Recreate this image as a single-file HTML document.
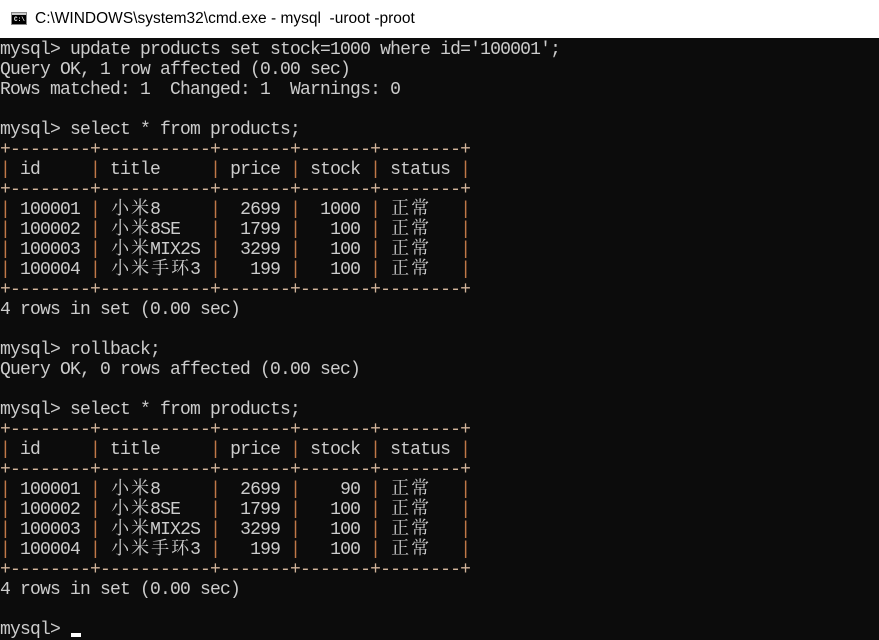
<!DOCTYPE html>
<html><head><meta charset="utf-8"><style>
html,body{margin:0;padding:0;width:879px;height:639px;overflow:hidden;background:#0c0c0c;}
#tb{position:absolute;left:0;top:0;width:879px;height:38px;background:#fff;}
#tb .t{position:absolute;left:35px;top:10px;font:15.5px "Liberation Sans","DejaVu Sans",sans-serif;color:#000;white-space:pre;}
#ic{position:absolute;left:11px;top:12px;width:16px;height:13px;background:#000;border:1px solid #888;box-sizing:border-box;}
#ic i{position:absolute;left:2px;top:3px;font:bold 6px "Liberation Mono",monospace;color:#fff;font-style:normal;}
#ic b{position:absolute;left:0;top:0;width:14px;height:2px;background:#ccc;}
.l{position:absolute;left:0;height:20px;line-height:20px;font-family:"Liberation Mono",monospace;font-size:18px;letter-spacing:-0.8px;color:#cccccc;white-space:pre;margin-top:2px;}
.c{display:inline-block;width:20px;font-family:"Noto Serif CJK SC","Noto Sans CJK SC",serif;font-size:18px;letter-spacing:0;text-align:center;line-height:20px;height:20px;vertical-align:top;position:relative;top:-3px;}
.d{color:#d2b49a}
.v{color:#c07848}
#cur{position:absolute;left:71px;top:633px;width:10px;height:4px;background:#fff;}
</style></head><body>
<div id="tb"><div id="ic"><b></b><i>C:\</i></div><div class="t">C:\WINDOWS\system32\cmd.exe - mysql  -uroot -proot</div></div>

<div class="l" style="top:38px">mysql&gt; update products set stock=1000 where id='100001';</div>
<div class="l" style="top:58px">Query OK, 1 row affected (0.00 sec)</div>
<div class="l" style="top:78px">Rows matched: 1  Changed: 1  Warnings: 0</div>
<div class="l" style="top:118px">mysql&gt; select * from products;</div>
<div class="l d" style="top:138px">+--------+-----------+-------+-------+--------+</div>
<div class="l" style="top:158px"><span class="v">|</span> id     <span class="v">|</span> title     <span class="v">|</span> price <span class="v">|</span> stock <span class="v">|</span> status <span class="v">|</span></div>
<div class="l d" style="top:178px">+--------+-----------+-------+-------+--------+</div>
<div class="l" style="top:198px"><span class="v">|</span> 100001 <span class="v">|</span> <span class="c">小</span><span class="c">米</span>8     <span class="v">|</span>  2699 <span class="v">|</span>  1000 <span class="v">|</span> <span class="c">正</span><span class="c">常</span>   <span class="v">|</span></div>
<div class="l" style="top:218px"><span class="v">|</span> 100002 <span class="v">|</span> <span class="c">小</span><span class="c">米</span>8SE   <span class="v">|</span>  1799 <span class="v">|</span>   100 <span class="v">|</span> <span class="c">正</span><span class="c">常</span>   <span class="v">|</span></div>
<div class="l" style="top:238px"><span class="v">|</span> 100003 <span class="v">|</span> <span class="c">小</span><span class="c">米</span>MIX2S <span class="v">|</span>  3299 <span class="v">|</span>   100 <span class="v">|</span> <span class="c">正</span><span class="c">常</span>   <span class="v">|</span></div>
<div class="l" style="top:258px"><span class="v">|</span> 100004 <span class="v">|</span> <span class="c">小</span><span class="c">米</span><span class="c">手</span><span class="c">环</span>3 <span class="v">|</span>   199 <span class="v">|</span>   100 <span class="v">|</span> <span class="c">正</span><span class="c">常</span>   <span class="v">|</span></div>
<div class="l d" style="top:278px">+--------+-----------+-------+-------+--------+</div>
<div class="l" style="top:298px">4 rows in set (0.00 sec)</div>
<div class="l" style="top:338px">mysql&gt; rollback;</div>
<div class="l" style="top:358px">Query OK, 0 rows affected (0.00 sec)</div>
<div class="l" style="top:398px">mysql&gt; select * from products;</div>
<div class="l d" style="top:418px">+--------+-----------+-------+-------+--------+</div>
<div class="l" style="top:438px"><span class="v">|</span> id     <span class="v">|</span> title     <span class="v">|</span> price <span class="v">|</span> stock <span class="v">|</span> status <span class="v">|</span></div>
<div class="l d" style="top:458px">+--------+-----------+-------+-------+--------+</div>
<div class="l" style="top:478px"><span class="v">|</span> 100001 <span class="v">|</span> <span class="c">小</span><span class="c">米</span>8     <span class="v">|</span>  2699 <span class="v">|</span>    90 <span class="v">|</span> <span class="c">正</span><span class="c">常</span>   <span class="v">|</span></div>
<div class="l" style="top:498px"><span class="v">|</span> 100002 <span class="v">|</span> <span class="c">小</span><span class="c">米</span>8SE   <span class="v">|</span>  1799 <span class="v">|</span>   100 <span class="v">|</span> <span class="c">正</span><span class="c">常</span>   <span class="v">|</span></div>
<div class="l" style="top:518px"><span class="v">|</span> 100003 <span class="v">|</span> <span class="c">小</span><span class="c">米</span>MIX2S <span class="v">|</span>  3299 <span class="v">|</span>   100 <span class="v">|</span> <span class="c">正</span><span class="c">常</span>   <span class="v">|</span></div>
<div class="l" style="top:538px"><span class="v">|</span> 100004 <span class="v">|</span> <span class="c">小</span><span class="c">米</span><span class="c">手</span><span class="c">环</span>3 <span class="v">|</span>   199 <span class="v">|</span>   100 <span class="v">|</span> <span class="c">正</span><span class="c">常</span>   <span class="v">|</span></div>
<div class="l d" style="top:558px">+--------+-----------+-------+-------+--------+</div>
<div class="l" style="top:578px">4 rows in set (0.00 sec)</div>
<div class="l" style="top:618px">mysql&gt;</div>
<div id="cur"></div>
</body></html>
